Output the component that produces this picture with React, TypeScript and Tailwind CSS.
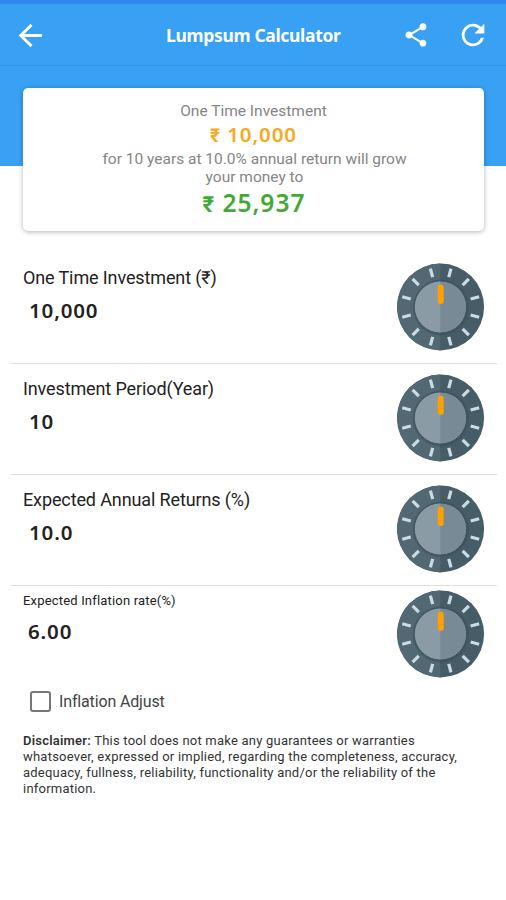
const TICKS = [15, 45, 75, 105, 135, 165, 195, 225, 255, 285, 315, 345];

const FIELDS = [
	{ label: "One Time Investment (₹)", value: "10,000" },
	{ label: "Investment Period(Year)", value: "10" },
	{ label: "Expected Annual Returns (%)", value: "10.0" },
];

function Dial() {
	return (
		<svg viewBox="0 0 88 88" className="size-[88px] shrink-0">
			<circle cx="43.7" cy="44" r="43.4" fill="#465c66" />
			<path d="M43.3 .6a43.4 43.4 0 0 0 0 86.8z" fill="#526872" />
			{TICKS.map((angle) => (
				<path key={angle} d="M43.7 4.2v8.8" stroke="#c9dbe3" strokeWidth="3.2" transform={`rotate(${angle} 43.7 44)`} />
			))}
			<circle cx="43.7" cy="44.5" r="28" fill="#34464f" opacity=".35" />
			<circle cx="43.7" cy="44" r="26" fill="#778a95" stroke="#40545e" strokeWidth="1" />
			<path d="M43.3 18.5a25.5 25.5 0 0 0 0 51z" fill="#8a9ba5" />
			<rect x="40.7" y="21.5" width="6" height="19.5" rx="3" fill="#ffa000" />
		</svg>
	);
}

function BackIcon() {
	return (
		<svg viewBox="0 0 24 24" className="size-[25px]" fill="none" stroke="white" strokeWidth="2.7">
			<path d="M23 12H2.5M13 1.8 2.6 12 13 22.2" />
		</svg>
	);
}

function ShareIcon() {
	return (
		<svg viewBox="0 0 24 24" className="size-[28px]" fill="white">
			<path d="M18 16.08c-.76 0-1.44.3-1.96.77L8.91 12.7c.05-.23.09-.46.09-.7s-.04-.47-.09-.7l7.05-4.11c.54.5 1.25.81 2.04.81 1.66 0 3-1.34 3-3s-1.34-3-3-3-3 1.34-3 3c0 .24.04.47.09.7L8.04 9.81C7.5 9.31 6.79 9 6 9c-1.66 0-3 1.34-3 3s1.34 3 3 3c.79 0 1.5-.31 2.04-.81l7.12 4.16c-.05.21-.08.43-.08.65 0 1.61 1.31 2.92 2.92 2.92s2.92-1.31 2.92-2.92-1.31-2.92-2.92-2.92z" />
		</svg>
	);
}

function RefreshIcon() {
	return (
		<svg viewBox="0 0 24 24" className="size-[34px]" fill="white">
			<path d="M17.65 6.35A7.95 7.95 0 0 0 12 4a8 8 0 1 0 7.73 10h-2.08A6 6 0 1 1 12 6c1.66 0 3.14.69 4.22 1.78L13 11h7V4z" />
		</svg>
	);
}

export default function App() {
	return (
		<div className="h-[900px] w-[506px] overflow-hidden bg-white font-['Roboto',sans-serif] text-[#222]">
			<div className="h-1 bg-[#2e89eb]" />

			{/* App bar */}
			<header className="flex h-[62px] items-center border-b border-[#3397e8] bg-[#38a1f4] pl-[18px] pr-4 pt-px">
				<BackIcon />
				<h1 className="ml-[123px] w-[176px] whitespace-nowrap font-['Noto_Sans',sans-serif] text-[17.5px] font-bold tracking-[-0.33px] text-white">
					Lumpsum Calculator
				</h1>
				<div className="ml-auto flex items-center gap-[26px]">
					<ShareIcon />
					<RefreshIcon />
				</div>
			</header>

			{/* Summary */}
			<div className="h-[100px] bg-[#38a1f4] px-[23px] pt-[22px]">
				<div className="flex h-[143px] w-[461px] flex-col items-center rounded-[5px] bg-white pt-[13px] text-center text-[#858585] shadow-[0_1px_5px_rgba(0,0,0,0.3)]">
					<p className="text-[15.5px] leading-5">One Time Investment</p>
					<p className="h-[29px] font-['Noto_Sans',sans-serif] text-[20.5px] font-semibold leading-[26px] tracking-[0.9px] text-[#f9a81b]">
						<span className="font-['Roboto',sans-serif] text-[19px] font-bold">₹</span> 10,000
					</p>
					<p className="w-[320px] pl-[2px] text-[15.5px] leading-[18px]">for 10 years at 10.0% annual return will grow your money to</p>
					<p className="pl-px font-['Noto_Sans',sans-serif] text-[24.5px] font-semibold leading-[34px] tracking-[1px] text-[#43a936]">
						<span className="font-['Roboto',sans-serif] text-[22px] font-bold">₹</span> 25,937
					</p>
				</div>
			</div>

			{/* Inputs */}
			<main className="mt-[87px] pl-[11px] pr-[9px]">
				{FIELDS.map((field) => (
					<div key={field.label} className="flex h-[111px] justify-between border-b border-[#dedede] px-3">
						<div className="pt-[14px]">
							<p className="text-[18px] leading-[22px] tracking-[-0.12px]">{field.label}</p>
							<p className="ml-[6px] mt-[9px] font-['Noto_Sans',sans-serif] text-[20.5px] font-semibold leading-6 tracking-[0.85px]">{field.value}</p>
						</div>
						<div className="pt-[10px]">
							<Dial />
						</div>
					</div>
				))}
				<div className="flex h-[94px] justify-between px-3">
					<div className="pt-[6px]">
						<p className="text-[13px] leading-[18px] tracking-[0.18px]">Expected Inflation rate(%)</p>
						<p className="ml-[5px] mt-[9px] font-['Noto_Sans',sans-serif] text-[20.5px] font-semibold leading-6 tracking-[0.85px]">6.00</p>
					</div>
					<div className="pt-[4px]">
						<Dial />
					</div>
				</div>
			</main>

			<label className="ml-[30px] mt-[11px] flex h-[21px] items-center gap-[8px] text-[16px] tracking-[-0.15px] text-[#444]">
				<span className="size-[21px] rounded-[3px] border-2 border-[#777]" />
				Inflation Adjust
			</label>

			<p className="ml-[23px] mt-[21px] w-[460px] text-[13px] leading-4 tracking-[0.22px] text-[#333]">
				<b className="font-semibold">Disclaimer:</b> This tool does not make any guarantees or warranties
				<br />
				whatsoever, expressed or implied, regarding the completeness, accuracy,
				<br />
				adequacy, fullness, reliability, functionality and/or the reliability of the
				<br />
				information.
			</p>
		</div>
	);
}
